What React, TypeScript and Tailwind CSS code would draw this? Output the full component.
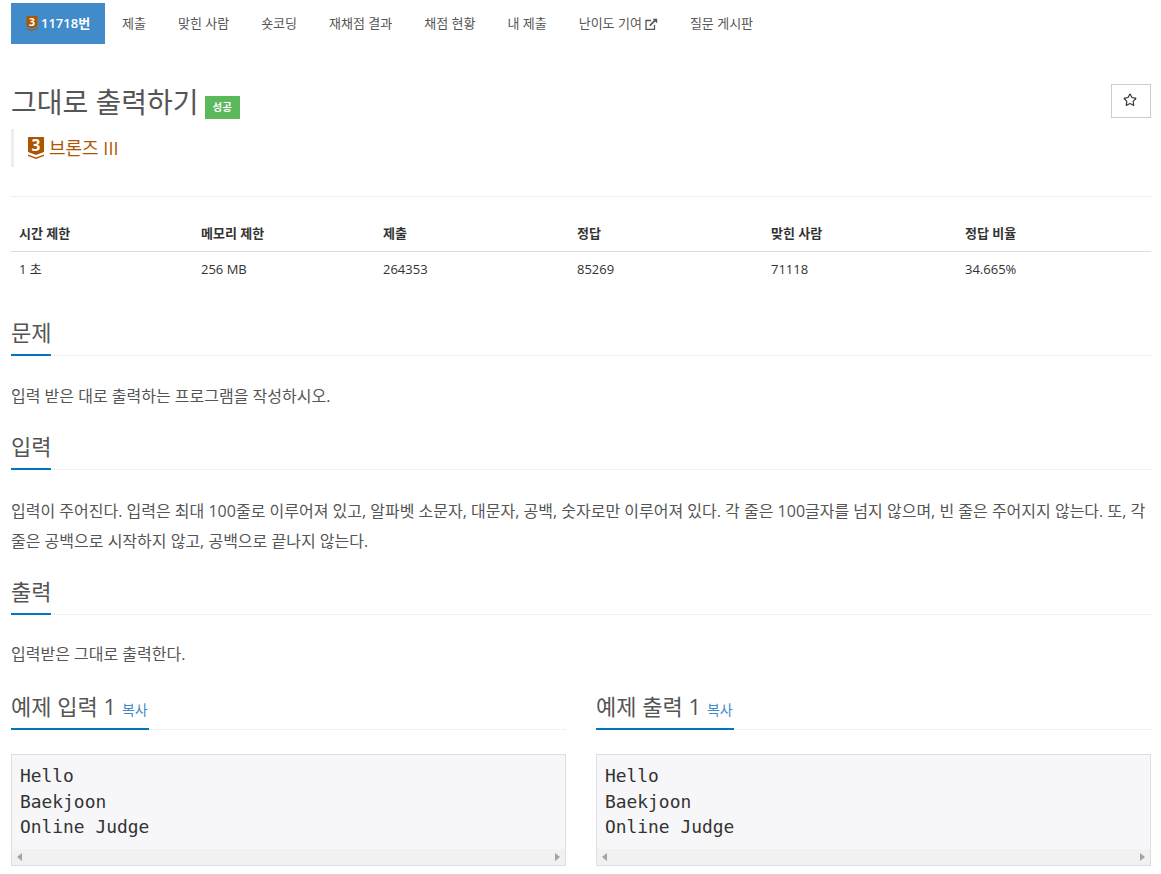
import { Star } from "lucide-react";

const font = "font-['Open_Sans','Noto_Sans_CJK_KR',sans-serif]";

const tabs = ["제출", "맞힌 사람", "숏코딩", "재채점 결과", "채점 현황", "내 제출"];
const stats = [
  ["시간 제한", "1 초"],
  ["메모리 제한", "256 MB"],
  ["제출", "264353"],
  ["정답", "85269"],
  ["맞힌 사람", "71118"],
  ["정답 비율", "34.665%"],
];

function TierIcon({ className }: { className: string }) {
  return (
    <svg viewBox="0 0 16 22" className={`${className} overflow-visible`}>
      <path d="M0 0h16v15l-8 3-8-3z" fill="#ad5600" />
      <path d="M0 17.5l8 3 8-3V19l-8 3-8-3z" fill="#ad5600" />
      <text x="8" y="14" textAnchor="middle" fontSize="15.5" fontWeight="700" fill="#fff" fontFamily="Open Sans, sans-serif">3</text>
    </svg>
  );
}

function NewWindowIcon() {
  return (
    <svg viewBox="0 0 13 12" className="h-3 w-[13px]" fill="none" stroke="#555" strokeWidth="1.3">
      <path d="M6 2.5H1v8.8h8.5V7" />
      <path d="M4.8 7.6 11 1.4" strokeWidth="1.7" />
      <path d="M7.6 0.8h4.6v4.6z" fill="#555" stroke="none" />
    </svg>
  );
}

function Headline({ title, copy }: { title: string; copy?: boolean }) {
  return (
    <div className="border-b border-dotted border-[#e6e6e6]">
      <div className="inline-block -mb-px border-b-2 border-[#0076c0] pb-[6px] align-top">
        <h2 className="h-[31px] text-[22px] leading-[31px] text-[#555]">
          {title}
          {copy && <span className="ml-[6px] pr-px text-[14px] leading-none text-[#428bca]">복사</span>}
        </h2>
      </div>
    </div>
  );
}

function Sample({ title }: { title: string }) {
  return (
    <div>
      <Headline title={title} copy />
      <div className="mt-6 flex h-[112px] flex-col border border-[#dfdfe3] bg-[#f7f7f9]">
        <pre className="flex-1 pl-2 pt-[8px] font-['DejaVu_Sans_Mono',monospace] text-[17.9px] leading-[25.7px] text-[#333]">
          {"Hello\nBaekjoon\nOnline Judge"}
        </pre>
        <div className="flex h-4 items-center justify-between bg-[#f1f1f1] px-[5px]">
          <span className="border-y-[4px] border-r-[5px] border-y-transparent border-r-[#a3a3a3]" />
          <span className="border-y-[4px] border-l-[5px] border-y-transparent border-l-[#a3a3a3]" />
        </div>
      </div>
    </div>
  );
}

export default function App() {
  return (
    <div className={`${font} h-[874px] overflow-hidden bg-white pl-[11px] pr-[10px] pt-[3px] text-[16px] text-[#555]`}>
      {/* Tabs */}
      <nav className="flex h-[41px] items-center text-[13px] text-[#555]">
        <a className="mr-px flex h-full w-[94px] items-center gap-[3px] bg-[#428bca] pl-[15px] font-semibold text-white">
          <TierIcon className="h-[15px] w-[12px]" />
          11718번
        </a>
        {tabs.map((t) => (
          <a key={t} className="px-4">{t}</a>
        ))}
        <a className="flex items-center gap-[3px] px-4">
          난이도 기여
          <NewWindowIcon />
        </a>
        <a className="px-4">질문 게시판</a>
      </nav>

      {/* Title */}
      <div className="mt-[40px] flex items-start justify-between">
        <div className="flex items-end gap-2">
          <h1 className="-mt-[2px] text-[28px] leading-[40px] text-[#555]">그대로 출력하기</h1>
          <span className="mb-[3px] -ml-[2px] bg-[#5cb85c] px-2 py-[4px] text-[10.5px] leading-[15px] font-semibold text-white">성공</span>
        </div>
        <button className="flex h-[34px] w-10 items-center justify-center border border-[#ccc] pb-[2px] pr-[2px]">
          <Star size={14} strokeWidth={2} className="text-[#333]" />
        </button>
      </div>
      <div className="mt-[7px] flex h-[38px] items-center gap-[5px] border-l-[3px] border-[#eee] pl-[14px] text-[18px] text-[#ad5600]">
        <TierIcon className="h-[22px] w-4" />
        브론즈 III
      </div>
      <div className="mt-[29px] border-t border-[#eee]" />

      {/* Stats */}
      <div className="mt-[27px] grid grid-cols-[182px_182px_194px_194px_194px_1fr] text-[13px] text-[#333]">
        {stats.map(([h]) => (
          <div key={h} className="border-b border-[#ddd] pb-[9px] pl-2 font-bold leading-[18px]">{h}</div>
        ))}
        {stats.map(([h, v]) => (
          <div key={h} className="pl-2 pt-[8px] leading-[18px]">{v}</div>
        ))}
      </div>

      <section className="mt-[39px]">
        <Headline title="문제" />
        <p className="mt-[25px] leading-[30px]">입력 받은 대로 출력하는 프로그램을 작성하시오.</p>
      </section>
      <section className="mt-[20px]">
        <Headline title="입력" />
        <p className="mt-[26px] leading-[30px]">
          입력이 주어진다. 입력은 최대 100줄로 이루어져 있고, 알파벳 소문자, 대문자, 공백, 숫자로만 이루어져 있다. 각 줄은 100글자를 넘지 않으며, 빈 줄은 주어지지 않는다. 또, 각 줄은 공백으로 시작하지 않고, 공백으로 끝나지 않는다.
        </p>
      </section>
      <section className="mt-[20px]">
        <Headline title="출력" />
        <p className="mt-[24px] leading-[30px]">입력받은 그대로 출력한다.</p>
      </section>

      <div className="mt-[22px] grid grid-cols-2 gap-[30px]">
        <Sample title="예제 입력 1" />
        <Sample title="예제 출력 1" />
      </div>
    </div>
  );
}
